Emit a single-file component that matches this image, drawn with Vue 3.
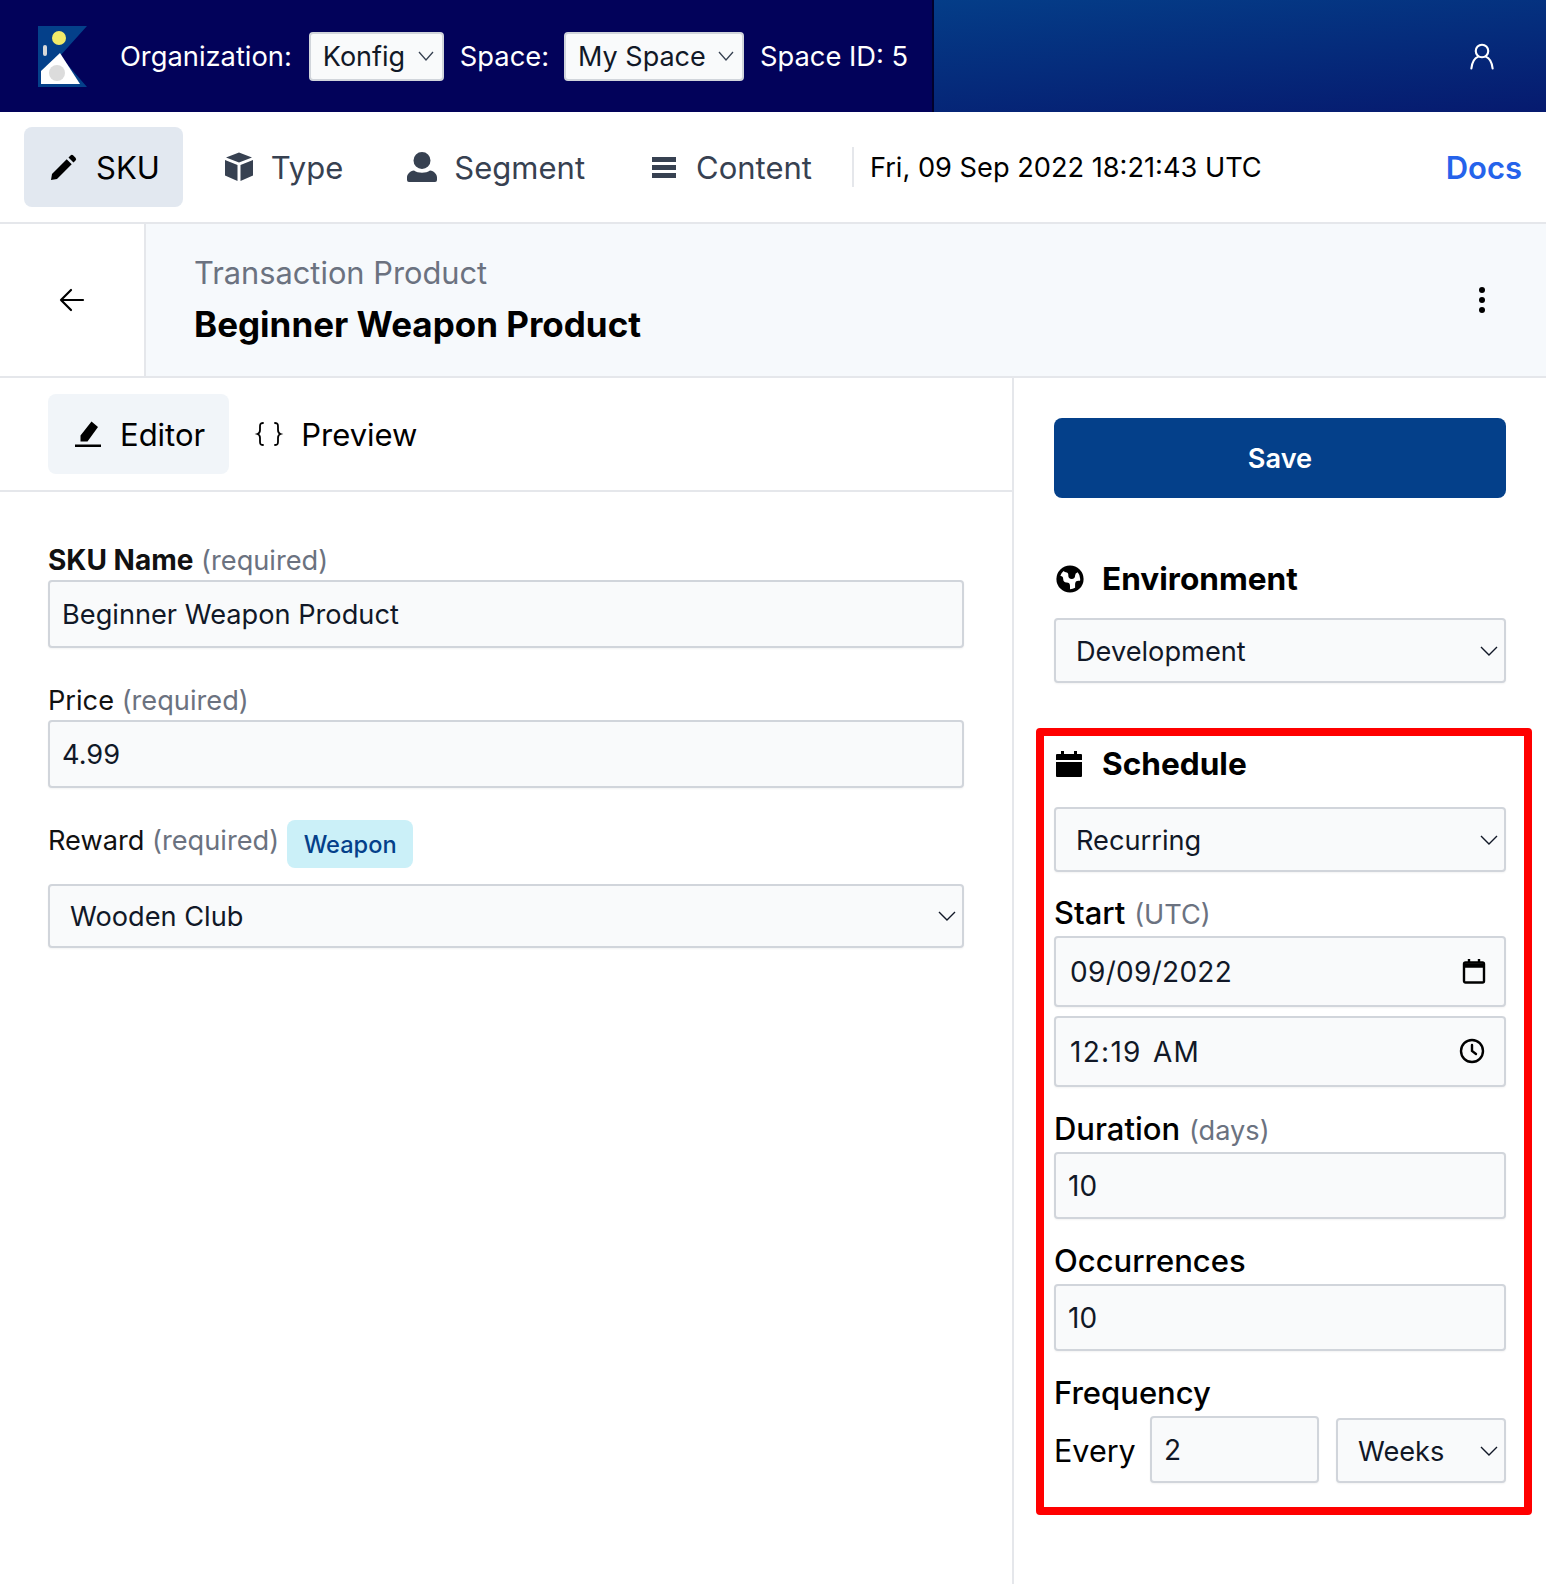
<template>
  <div class="page">
    <header class="topbar">
      <div class="topbar-left">
        <svg class="logo" viewBox="0 0 49 61" width="49" height="61">
          <polygon points="0,0 49,0 22,30 49,61 0,61" fill="#04408a" />
          <polygon points="22,27 42,58 3,58 3,45" fill="#fff" />
          <circle cx="19" cy="47" r="8" fill="#dcdcdc" />
          <circle cx="21" cy="12" r="7" fill="#f2ea6a" />
          <rect x="5" y="19" width="4" height="11" rx="2" fill="#d8d8d8" />
        </svg>
        <span class="top-label org-label">Organization:</span>
        <select class="top-select org-select"><option>Konfig</option></select>
        <span class="top-label">Space:</span>
        <select class="top-select space-select"><option>My Space</option></select>
        <span class="top-label">Space ID: 5</span>
      </div>
      <div class="topbar-right">
        <svg width="30" height="30" viewBox="0 0 24 24" fill="none" stroke="#fff" stroke-width="1.7" stroke-linecap="round">
          <circle cx="12" cy="8" r="5" />
          <path d="M3.5 22c.5-5 3-8.5 5.5-9.5M20.5 22c-.5-5-3-8.5-5.500-9.500" />
        </svg>
      </div>
    </header>

    <nav class="mainnav">
      <a v-for="item in navItems" :key="item.name" class="nav-item" :class="{ active: item.active }">
        <svg width="32" height="32" viewBox="0 0 32 32" fill="currentColor"><path :d="item.icon" /></svg>
        {{ item.name }}
      </a>
      <div class="nav-divider"></div>
      <span class="nav-date">Fri, 09 Sep 2022 18:21:43 UTC</span>
      <a class="docs">Docs</a>
    </nav>

    <section class="titlebar">
      <div class="back">
        <svg width="30" height="30" viewBox="0 0 30 30" fill="none" stroke="#000" stroke-width="2.200" stroke-linecap="round" stroke-linejoin="round">
          <path d="M26 15H4M14 5 4 15l10 10" />
        </svg>
      </div>
      <div class="title-main">
        <div>
          <div class="title-type">Transaction Product</div>
          <div class="title-name">Beginner Weapon Product</div>
        </div>
        <svg width="8" height="28" viewBox="0 0 8 28" fill="#000">
          <circle cx="4" cy="4" r="3" /><circle cx="4" cy="14" r="3" /><circle cx="4" cy="24" r="3" />
        </svg>
      </div>
    </section>

    <div class="columns">
      <main class="left">
        <div class="tabs">
          <a class="tab active">
            <svg width="32" height="32" viewBox="0 0 32 32" fill="#000">
              <path d="M19.500 3.500 26 9 15.500 23.500H8.500V17.500ZM3 26.500H29V29H3Z" />
            </svg>
            Editor
          </a>
          <a class="tab">
            <svg width="32" height="32" viewBox="0 0 32 32" fill="none" stroke="#000" stroke-width="1.800" stroke-linecap="round">
              <path d="M10 5c-3 0-3 1.500-3 4v3c0 2.500-1 3.500-2.500 4C6 16.500 7 17.500 7 20v3c0 2.500 0 4 3 4M22 5c3 0 3 1.500 3 4v3c0 2.500 1 3.500 2.500 4-1.500.5-2.500 1.500-2.500 4v3c0 2.500 0 4-3 4" />
            </svg>
            Preview
          </a>
        </div>
        <form class="form">
          <label class="lbl"><b class="semi">SKU Name</b> <span class="muted">(required)</span></label>
          <input class="field name-field" value="Beginner Weapon Product" />
          <label class="lbl price-lbl">Price <span class="muted">(required)</span></label>
          <input class="field name-field" value="4.99" />
          <div class="reward-row">
            <label class="lbl">Reward <span class="muted">(required)</span></label>
            <span class="badge">Weapon</span>
          </div>
          <select class="field sel left-sel"><option>Wooden Club</option></select>
        </form>
      </main>

      <aside class="right">
        <button class="save">Save</button>
        <h3 class="side-head env-head">
          <svg class="globe" width="34" height="34" viewBox="0 0 20 20" fill="#000">
            <path
              fill-rule="evenodd"
              clip-rule="evenodd"
              d="M10 18a8 8 0 100-16 8 8 0 000 16zM4.332 8.027a6.012 6.012 0 011.912-2.706C6.512 5.730 6.974 6 7.500 6A1.500 1.500 0 019 7.500V8a2 2 0 004 0 2 2 0 011.523-1.943A5.977 5.977 0 0116 10c0 .34-.028.675-.083 1H15a2 2 0 00-2 2v2.197A5.973 5.973 0 0110 16v-2a2 2 0 00-2-2 2 2 0 01-2-2 2 2 0 00-1.668-1.973z"
            />
          </svg>
          Environment
        </h3>
        <select class="field sel side-sel"><option>Development</option></select>

        <div class="schedule">
          <h3 class="side-head">
            <svg width="30" height="30" viewBox="0 0 30 30" fill="#000">
              <path d="M7 2h3v3h10V2h3v3h4a1 1 0 0 1 1 1v5H2V6a1 1 0 0 1 1-1h4ZM2 13h26v14a1 1 0 0 1-1 1H3a1 1 0 0 1-1-1Z" />
            </svg>
            Schedule
          </h3>
          <select class="field sel side-sel sched-sel"><option>Recurring</option></select>

          <label class="big-lbl start-lbl"><span class="med">Start</span> <span class="muted">(UTC)</span></label>
          <div class="icon-field">
            <input class="field tall" value="09/09/2022" />
            <svg class="field-icon" width="24" height="26" viewBox="0 0 24 26" fill="none" stroke="#000" stroke-width="2.400">
              <rect x="2" y="4.500" width="20" height="20" rx="1.500" />
              <path d="M2 7.500h20" stroke-width="4.500" />
              <path d="M7 1v4M17 1v4" />
            </svg>
          </div>
          <div class="icon-field time-field">
            <input class="field tall time-input" value="12:19 AM" />
            <svg class="field-icon clock" width="26" height="26" viewBox="0 0 26 26" fill="none" stroke="#000" stroke-width="2.400" stroke-linecap="round">
              <circle cx="13" cy="13" r="11" />
              <path d="M13 7v6l4 3" />
            </svg>
          </div>

          <label class="big-lbl gap-lbl"><span class="med">Duration</span> <span class="muted">(days)</span></label>
          <input class="field plain" value="10" />
          <label class="big-lbl gap-lbl"><span class="med">Occurrences</span></label>
          <input class="field plain" value="10" />
          <label class="big-lbl gap-lbl"><span class="med">Frequency</span></label>
          <div class="freq-row">
            <span class="every">Every</span>
            <input class="field plain every-input" value="2" />
            <select class="field sel weeks"><option>Weeks</option></select>
          </div>
        </div>
      </aside>
    </div>
  </div>
</template>

<script setup>
const navItems = [
  {
    name: "SKU",
    active: true,
    icon: "M22.500 4.500a2 2 0 0 1 2.800 0l2.200 2.200a2 2 0 0 1 0 2.800l-2 2-5-5ZM18.700 8.300l5 5L9 28l-6 1 1-6Z",
  },
  {
    name: "Type",
    icon: "M16 1.500 29 6.500 16 11.500 3 6.500ZM2 9l12.500 5v16L2 24.500ZM30 9 17.500 14v16L30 24.500Z",
  },
  {
    name: "Segment",
    icon: "M16 1a8.500 8.500 0 1 1 0 17 8.500 8.500 0 0 1 0-17ZM8 19.500c2 1.500 5 2.200 8 2.200s6-.7 8-2.200c4 .5 7 3.500 7 7V29a2 2 0 0 1-2 2H3a2 2 0 0 1-2-2v-2.500c0-3.500 3-6.500 7-7Z",
  },
  {
    name: "Content",
    icon: "M4 6h24v5H4ZM4 14h24v5H4ZM4 22h24v5H4Z",
  },
];
</script>

<style>
html,
body {
  margin: 0;
  background: #fff;
}
</style>

<style scoped>
.page {
  width: 1546px;
  height: 1584px;
  overflow: hidden;
  font-family: Inter, "Liberation Sans", sans-serif;
  color: #000;
}

.topbar {
  display: flex;
  height: 112px;
}

.topbar-left {
  width: 934px;
  flex: none;
  display: flex;
  align-items: center;
  padding-left: 38px;
  box-sizing: border-box;
  background: #02025a;
  border-right: 2px solid #01012c;
}

.logo {
  margin-right: 33px;
  margin-top: 1px;
}

.top-label {
  color: #fff;
  font-size: 27.300px;
  white-space: nowrap;
}

.org-label {
  margin-right: 17px;
}

.top-select {
  appearance: none;
  height: 49px;
  border: 2px solid #d1d5db;
  border-radius: 4px;
  background-color: #f9fafb;
  background-image: url("data:image/svg+xml,%3Csvg xmlns='http://www.w3.org/2000/svg' width='18' height='12' viewBox='0 0 18 12' fill='none' stroke='%23374151' stroke-width='1.300'%3E%3Cpath d='M2 2l7 8 7-8'/%3E%3C/svg%3E");
  background-repeat: no-repeat;
  background-position: right 7px center;
  font-family: inherit;
  font-size: 27px;
  color: #111827;
  padding: 0 0 0 12px;
  margin-right: 16px;
}

.org-select {
  width: 135px;
}

.space-select {
  width: 180px;
  margin-left: 15px;
}

.topbar-right {
  flex: 1;
  display: flex;
  align-items: center;
  justify-content: flex-end;
  padding-right: 49px;
  background: linear-gradient(175deg, #043d88 0%, #061a6f 100%);
}

.mainnav {
  display: flex;
  align-items: center;
  gap: 16px;
  height: 110px;
  padding: 0 24px;
  border-bottom: 2px solid #e5e7eb;
}

.nav-item {
  display: flex;
  align-items: center;
  gap: 16px;
  height: 80px;
  padding: 0 23px 0 24px;
  border-radius: 8px;
  font-size: 31px;
  color: #374151;
}

.nav-item.active {
  background: #e2e8f0;
  color: #000;
}

.nav-divider {
  width: 2px;
  height: 40px;
  margin-left: 1px;
  background: #e5e7eb;
}

.nav-date {
  font-size: 27.200px;
  white-space: nowrap;
}

.docs {
  margin-left: auto;
  font-size: 31px;
  font-weight: 600;
  color: #2563eb;
}

.titlebar {
  display: flex;
  height: 152px;
  border-bottom: 2px solid #e5e7eb;
}

.back {
  width: 144px;
  flex: none;
  display: flex;
  align-items: center;
  justify-content: center;
  border-right: 2px solid #e5e7eb;
}

.title-main {
  flex: 1;
  display: flex;
  align-items: center;
  justify-content: space-between;
  padding: 0 60px 0 48px;
  background: #f6f9fc;
}

.title-type {
  font-size: 30.800px;
  color: #6b7280;
  line-height: 42px;
}

.title-name {
  font-size: 35px;
  font-weight: 700;
  line-height: 50px;
  margin-top: 5px;
}

.columns {
  display: flex;
  height: 1208px;
}

.left {
  width: 1012px;
  flex: none;
  border-right: 2px solid #e5e7eb;
}

.tabs {
  display: flex;
  height: 96px;
  padding: 16px 48px 0;
  border-bottom: 2px solid #e5e7eb;
}

.tab {
  display: flex;
  align-items: center;
  gap: 16px;
  height: 80px;
  padding: 0 24px;
  border-radius: 8px;
  font-size: 31px;
}

.tab.active {
  background: #f1f5f9;
}

.form {
  padding: 49px 48px 0;
  display: flex;
  flex-direction: column;
}

.lbl {
  font-size: 27.200px;
  line-height: 38px;
  color: #111;
  white-space: nowrap;
}

.semi {
  font-size: 28px;
  font-weight: 700;
}

.muted {
  color: #6b7280;
  font-weight: 400;
}

.field {
  box-sizing: border-box;
  width: 100%;
  border: 2px solid #d1d5db;
  border-radius: 4px;
  background-color: #f9fafb;
  box-shadow: 0 1px 2px rgba(0, 0, 0, 0.05);
  font-family: inherit;
  font-size: 27.200px;
  color: #111827;
  outline: none;
}

.name-field {
  height: 68px;
  padding: 0 12px;
}

.price-lbl {
  margin-top: 34px;
}

.reward-row {
  display: flex;
  align-items: flex-start;
  gap: 8px;
  margin-top: 32px;
}

.reward-row .lbl {
  margin-top: 2px;
}

.badge {
  display: flex;
  align-items: center;
  justify-content: center;
  width: 126px;
  height: 48px;
  border-radius: 8px;
  background: #cbf0f8;
  color: #04408a;
  font-size: 23.600px;
  font-weight: 500;
}

.sel {
  appearance: none;
  background-image: url("data:image/svg+xml,%3Csvg xmlns='http://www.w3.org/2000/svg' width='20' height='14' viewBox='0 0 20 14' fill='none' stroke='%23111827' stroke-width='1.400'%3E%3Cpath d='M2 3l8 8 8-8'/%3E%3C/svg%3E");
  background-repeat: no-repeat;
  background-position: right 5px center;
}

.left-sel {
  height: 64px;
  margin-top: 16px;
  padding: 0 20px;
}

.right {
  flex: 1;
  min-width: 0;
  padding: 40px 26px 0 40px;
}

.save {
  display: block;
  width: 452px;
  height: 80px;
  border: none;
  border-radius: 8px;
  background: #04408a;
  color: #fff;
  font-family: inherit;
  font-size: 27.200px;
  font-weight: 600;
}

.side-head {
  display: flex;
  align-items: center;
  gap: 18px;
  margin: 0;
  font-size: 31.600px;
  font-weight: 700;
  line-height: 44px;
}

.globe {
  margin: 0 -3px 0 -1px;
}

.env-head {
  margin-top: 59px;
}

.side-sel {
  width: 452px;
  height: 65px;
  margin-top: 17px;
  padding: 2px 20px 0;
}

.schedule {
  margin: 45px 0 0 -18px;
  width: 496px;
  height: 787px;
  box-sizing: border-box;
  border: 8px solid #ff0000;
  border-radius: 4px;
  padding: 6px 18px 0 10px;
}

.sched-sel {
  margin-top: 21px;
}

.big-lbl {
  display: block;
  font-size: 31px;
  line-height: 42px;
}

.med {
  font-weight: 500;
}

.big-lbl .muted {
  font-size: 27.200px;
  line-height: 1;
}

.start-lbl {
  margin-top: 20px;
}

.icon-field {
  position: relative;
  margin-top: 2px;
}

.tall {
  display: block;
  height: 71px;
  padding: 0 14px;
  font-size: 28px;
  letter-spacing: 0.3px;
}

.time-input {
  letter-spacing: 1.300px;
  word-spacing: 2px;
}

.time-field {
  margin-top: 9px;
}

.field-icon {
  position: absolute;
  right: 20px;
  top: 22px;
}

.clock {
  right: 21px;
}

.gap-lbl {
  margin-top: 21px;
}

.plain {
  display: block;
  height: 67px;
  padding: 0 12px;
  margin-top: 2px;
  font-size: 28px;
}

.freq-row {
  display: flex;
  align-items: center;
  margin-top: 2px;
}

.every {
  font-size: 30.500px;
  width: 96px;
  flex: none;
  margin-top: 2px;
}

.every-input {
  width: 169px;
  flex: none;
  margin-top: 0;
}

.weeks {
  width: 170px;
  flex: none;
  height: 65px;
  margin-left: 17px;
  padding: 2px 20px 0;
  margin-top: 2px;
}
</style>
